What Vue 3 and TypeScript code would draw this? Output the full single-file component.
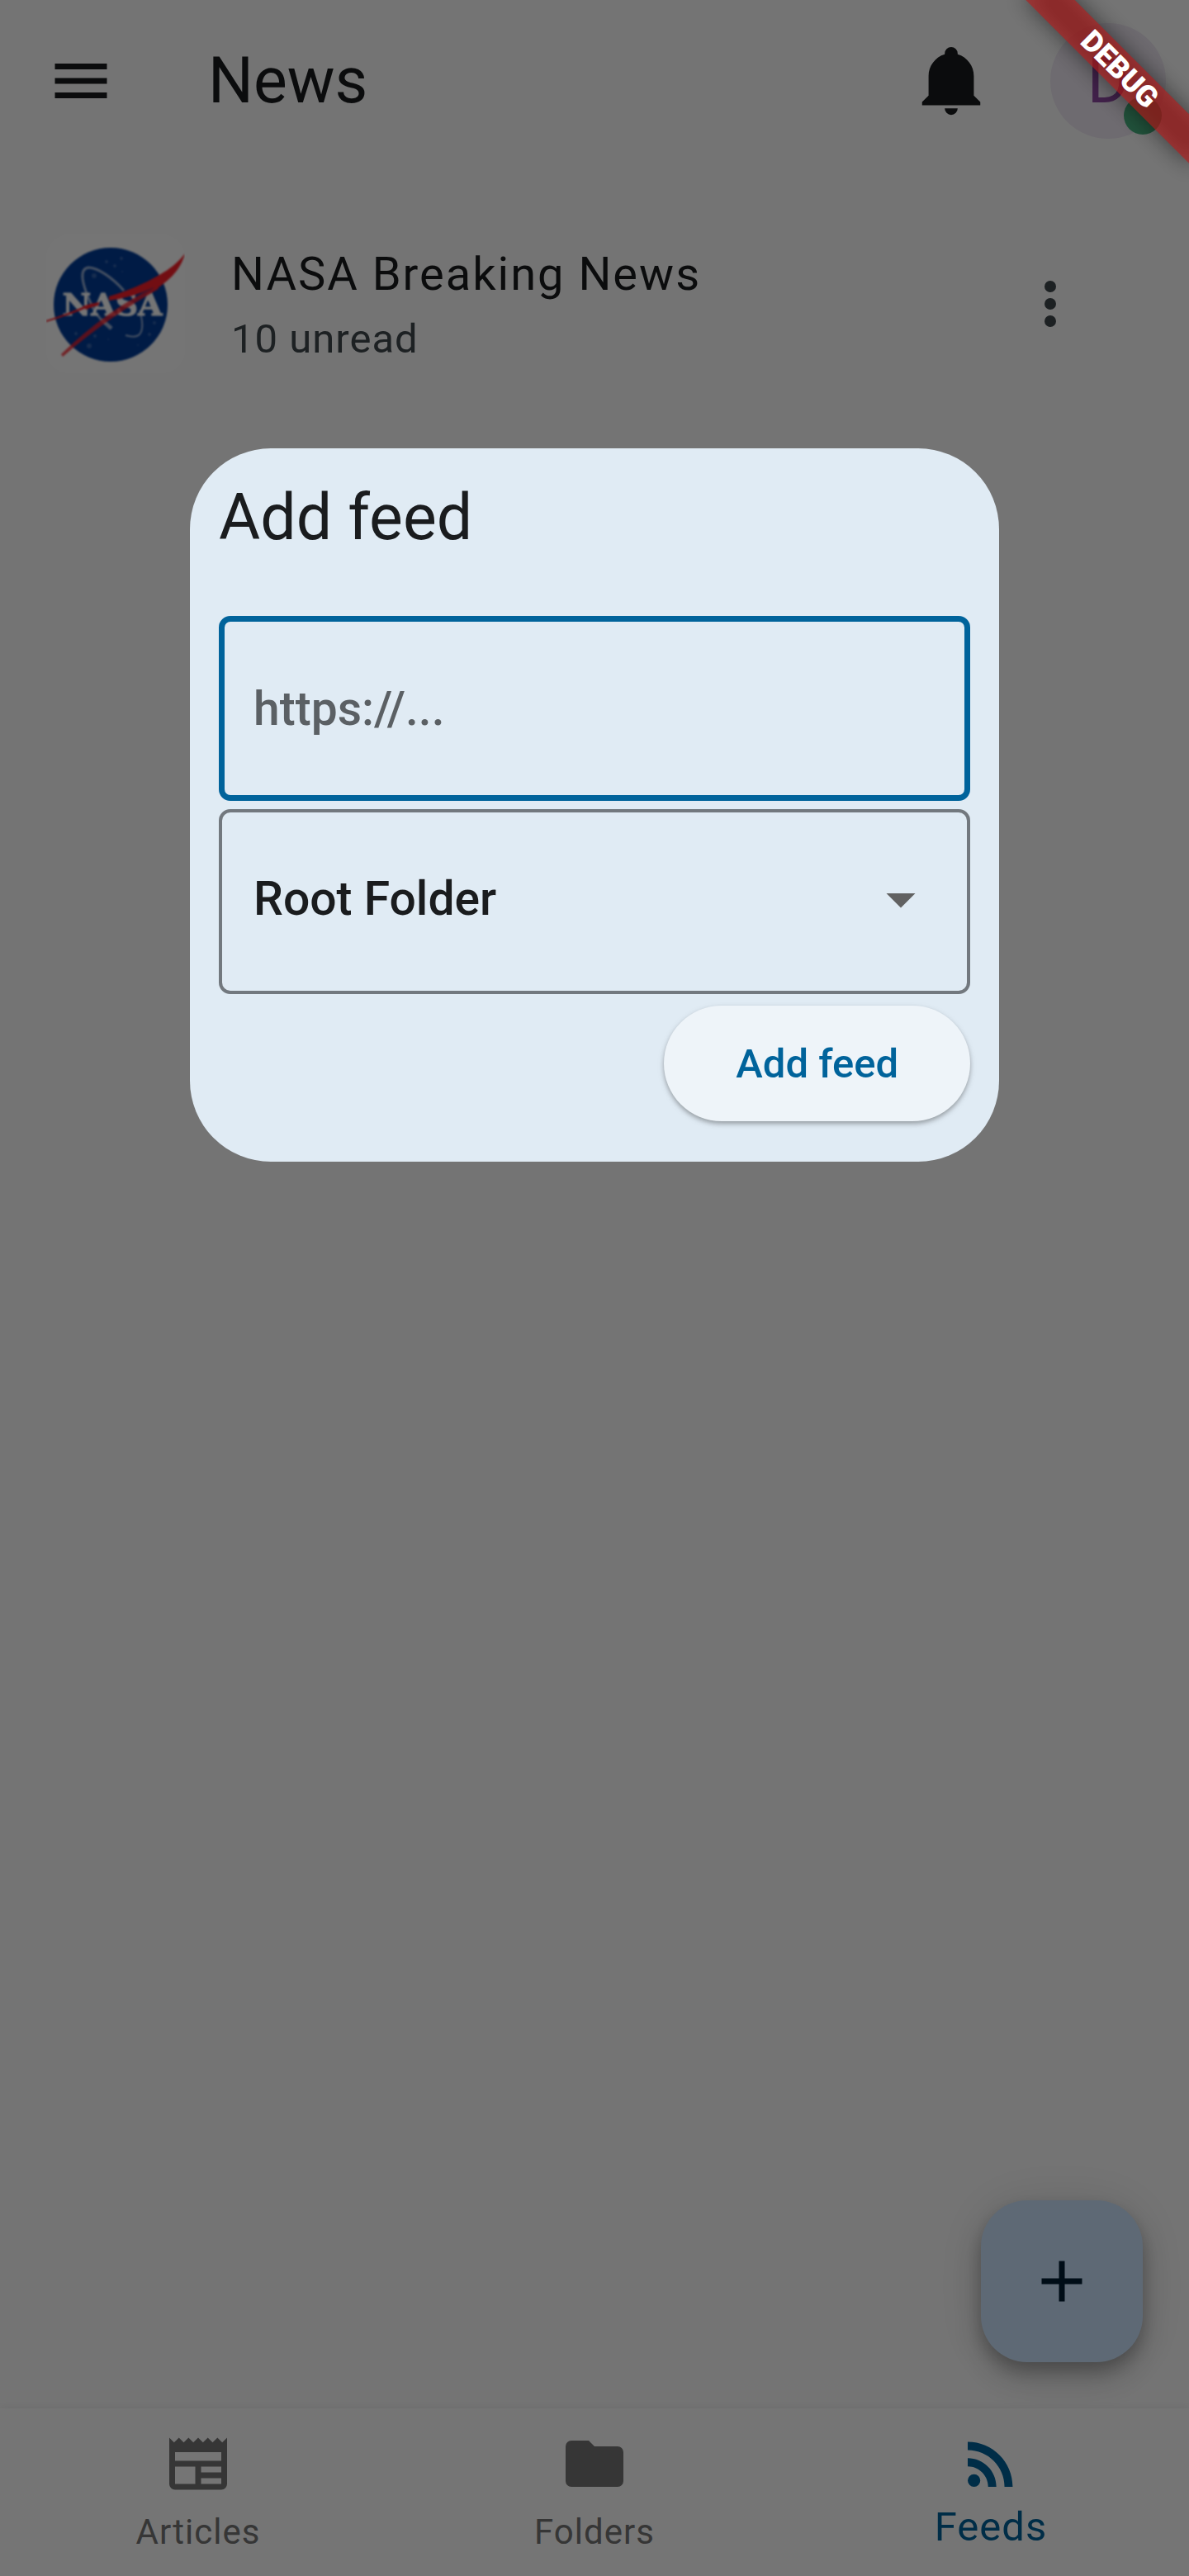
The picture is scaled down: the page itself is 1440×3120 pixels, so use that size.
<script setup lang="ts">
import { ref } from 'vue'

interface Feed {
  id: number
  title: string
  unread: number
}

interface Tab {
  id: string
  label: string
  path: string
}

const feeds: Feed[] = [{ id: 1, title: 'NASA Breaking News', unread: 10 }]

const tabs: Tab[] = [
  {
    id: 'articles',
    label: 'Articles',
    path: 'M22 3l-1.67 1.67L18.67 3 17 4.67 15.33 3l-1.66 1.67L12 3l-1.67 1.67L8.67 3 7 4.67 5.33 3 3.67 4.67 2 3v16a2 2 0 0 0 2 2h16a2 2 0 0 0 2-2V3zM11 19H4v-6h7v6zm9 0h-7v-2h7v2zm0-4h-7v-2h7v2zm0-4H4V8h16v3z',
  },
  {
    id: 'folders',
    label: 'Folders',
    path: 'M10 4H4a2 2 0 0 0-2 2v12a2 2 0 0 0 2 2h16a2 2 0 0 0 2-2V8a2 2 0 0 0-2-2h-8l-2-2z',
  },
  {
    id: 'feeds',
    label: 'Feeds',
    path: 'M6.180 15.640a2.180 2.180 0 1 1 0 4.360a2.180 2.180 0 0 1 0-4.360M4 4.440v2.830c7.030 0 12.730 5.700 12.730 12.730h2.830c0-8.590-6.970-15.560-15.560-15.560zm0 5.660v2.830c3.900 0 7.070 3.170 7.070 7.070h2.830c0-5.470-4.430-9.900-9.900-9.900z',
  },
]

const activeTab = ref('feeds')
const url = ref('')
const folder = ref('root')
</script>

<template>
  <div class="app">
    <header class="bar">
      <button class="icon-button" type="button" aria-label="Menu">
        <svg class="icon" viewBox="0 0 24 24"><path d="M3 18h18v-2H3v2zm0-5h18v-2H3v2zm0-7v2h18V6H3z" /></svg>
      </button>
      <h1 class="bar-title">News</h1>
      <button class="icon-button" type="button" aria-label="Notifications">
        <svg class="icon bell" viewBox="0 0 24 25">
          <path d="M21 19v1H3v-1l2-2v-6c0-3.100 2.030-5.830 5-6.710V4a2 2 0 0 1 4 0v.29c2.970.88 5 3.610 5 6.710v6l2 2M14 21a2 2 0 0 1-4 0" />
        </svg>
      </button>
      <button class="avatar" type="button" aria-label="Account">
        D
        <span class="status"></span>
      </button>
    </header>

    <main class="content">
      <ul class="feeds">
        <li v-for="feed in feeds" :key="feed.id" class="feed">
          <svg class="logo" viewBox="0 0 168 168" role="img" aria-label="NASA">
            <g class="logo-art">
              <circle cx="78" cy="85" r="69" fill="#003b97" />
              <g fill="none" stroke="#fff" stroke-opacity=".6" stroke-width="3">
                <path d="M94 68C80 52 62 40 51 40C39 42 44 60 52 79C57 92 64 102 72 108" />
                <path d="M113 92C118 108 117 116 113 121Q108 126 96 122" stroke-width="2" />
                <path d="M67 103L79 114" stroke-width="5" />
              </g>
              <g fill="#fff" fill-opacity=".2">
                <circle cx="73" cy="33" r="2" /><circle cx="83" cy="38" r="2" /><circle cx="91" cy="29" r="2" />
                <circle cx="58" cy="50" r="3" /><circle cx="92" cy="45" r="1" /><circle cx="36" cy="120" r="2" />
                <circle cx="52" cy="135" r="3" /><circle cx="59" cy="123" r="2" /><circle cx="125" cy="121" r="2" />
                <circle cx="131" cy="107" r="2" /><circle cx="75" cy="127" r="1" /><circle cx="111" cy="134" r="1" />
              </g>
              <text class="logo-text" x="80" y="98" text-anchor="middle">NASA</text>
              <g fill="#f8202a">
                <path d="M0 104C20 98 34 92 46 87L46 90C34 95 20 100 0 106Z" />
                <path d="M44 87Q54 83 65 82L63 86Q54 88 48 91Z" />
                <path d="M76 75Q110 65 137 49Q157 38 168 23Q163 43 144 58Q130 70 110 80Q130 68 130 64Q106 76 76 80Z" />
                <path d="M134 62Q74 91 18 145L20 148Q74 101 136 66Z" fill-opacity=".8" />
              </g>
            </g>
          </svg>
          <div class="feed-text">
            <span class="feed-title">{{ feed.title }}</span>
            <span class="feed-count">{{ feed.unread }} unread</span>
          </div>
          <button class="icon-button more" type="button" aria-label="More options">
            <svg class="icon" viewBox="0 0 24 24">
              <circle cx="12" cy="6" r="2" /><circle cx="12" cy="12" r="2" /><circle cx="12" cy="18" r="2" />
            </svg>
          </button>
        </li>
      </ul>
      <button class="fab" type="button" aria-label="Add">
        <svg class="icon" viewBox="0 0 24 24"><path d="M19 13h-6v6h-2v-6H5v-2h6V5h2v6h6v2z" /></svg>
      </button>
    </main>

    <nav class="tabs">
      <button
        v-for="tab in tabs"
        :key="tab.id"
        class="tab"
        :class="{ active: tab.id === activeTab }"
        type="button"
        @click="activeTab = tab.id"
      >
        <svg class="icon" viewBox="0 0 24 24"><path :d="tab.path" /></svg>
        <span class="tab-label">{{ tab.label }}</span>
      </button>
    </nav>

    <div class="scrim">
      <form class="dialog" role="dialog" aria-labelledby="dialog-title" @submit.prevent>
        <h2 id="dialog-title" class="dialog-title">Add feed</h2>
        <input v-model="url" class="field url" type="text" placeholder="https://..." aria-label="Feed address" />
        <div class="select-wrap">
          <select v-model="folder" class="field folder" aria-label="Folder">
            <option value="root">Root Folder</option>
          </select>
          <svg class="icon arrow" viewBox="0 0 24 24"><path d="M7 10l5 5 5-5z" /></svg>
        </div>
        <button class="submit" type="submit">Add feed</button>
      </form>
    </div>

    <div class="corner">
      <span class="ribbon">DEBUG</span>
    </div>
  </div>
</template>

<style>
body {
  margin: 0;
}
</style>

<style scoped>
* {
  box-sizing: border-box;
}

.app {
  position: relative;
  display: flex;
  flex-direction: column;
  min-height: 100vh;
  overflow: hidden;
  background: #fdfdfd;
  color: #1a1c1e;
  font-family: Roboto, "Noto Sans", sans-serif;
}

button {
  padding: 0;
  border: 0;
  background: none;
  color: inherit;
  font: inherit;
}

.icon {
  display: block;
  width: 84px;
  height: 84px;
  fill: currentColor;
}

.bar {
  display: flex;
  align-items: center;
  height: 196px;
  padding: 0 28px 0 56px;
}

.bar-title {
  flex: 1;
  margin: 0 0 0 112px;
  font-size: 77px;
  font-weight: 400;
  line-height: 98px;
}

.bell {
  width: 94px;
  height: 98px;
}

.avatar {
  position: relative;
  width: 140px;
  height: 140px;
  margin-left: 73px;
  border-radius: 50%;
  background: #f0e9f4;
  color: #8e48a2;
  font-size: 77px;
  line-height: 140px;
  text-align: center;
}

.status {
  position: absolute;
  right: 5px;
  bottom: 5px;
  width: 46px;
  height: 46px;
  border-radius: 50%;
  background: #49b382;
}

.content {
  display: flex;
  flex: 1;
  flex-direction: column;
  justify-content: space-between;
}

.feeds {
  margin: 0;
  padding: 84px 126px 0 56px;
  list-style: none;
}

.feed {
  display: flex;
  align-items: center;
  min-height: 175px;
}

.logo {
  flex: none;
  width: 168px;
  height: 168px;
  border-radius: 28px;
  background: #fff;
}

.logo-art {
  filter: blur(1px);
}

.logo-text {
  fill: #fff;
  stroke: #fff;
  stroke-width: 1px;
  font: 700 38px "DejaVu Serif", serif;
}

.feed-text {
  display: flex;
  flex: 1;
  flex-direction: column;
  gap: 2px;
  margin-left: 56px;
}

.feed-title {
  font-size: 56px;
  line-height: 84px;
  letter-spacing: 2px;
}

.feed-count {
  color: #41484d;
  font-size: 49px;
  line-height: 70px;
  letter-spacing: 1px;
}

.more {
  color: #41484d;
}

.fab {
  display: flex;
  align-items: center;
  justify-content: center;
  align-self: flex-end;
  width: 196px;
  height: 196px;
  margin: 0 56px 56px 0;
  border-radius: 56px;
  background: #cde5ff;
  color: #001d32;
  box-shadow: 0 10px 18px rgba(0, 0, 0, 0.2), 0 20px 35px rgba(0, 0, 0, 0.14), 0 4px 62px rgba(0, 0, 0, 0.12);
}

.tabs {
  display: flex;
  height: 203px;
  padding-top: 25px;
  background: #fff;
  box-shadow: 0 -2px 10px rgba(0, 0, 0, 0.06);
}

.tab {
  display: flex;
  flex: 1;
  flex-direction: column;
  align-items: center;
  color: #767676;
}

.tab-label {
  font-size: 42px;
  line-height: 82px;
  letter-spacing: 1px;
}

.tab.active {
  color: #00639b;
}

.active .tab-label {
  font-size: 49px;
  line-height: 70px;
}

.scrim {
  position: absolute;
  inset: 0;
  display: flex;
  align-items: flex-start;
  justify-content: center;
  padding: 543px 140px 140px;
  background: rgba(0, 0, 0, 0.54);
}

.dialog {
  display: flex;
  flex: 0 1 980px;
  flex-direction: column;
  padding: 35px 35px 49px;
  border-radius: 98px;
  background: #e0ebf4;
}

.dialog-title {
  margin: 0 0 70px;
  font-size: 77px;
  font-weight: 400;
  line-height: 98px;
}

.field {
  display: block;
  width: 100%;
  height: 224px;
  margin: 0;
  border-radius: 14px;
  outline: 0;
  background: transparent;
  color: #1a1c1e;
  font-family: inherit;
  font-size: 57px;
  font-weight: 500;
}

.url {
  padding: 0 35px;
  border: 7px solid #00639b;
}

.url::placeholder {
  color: #5b6064;
  opacity: 1;
}

.select-wrap {
  display: grid;
  align-items: center;
  margin-top: 10px;
}

.select-wrap > * {
  grid-area: 1 / 1;
}

.folder {
  padding: 0 38px 8px;
  border: 4px solid #72787e;
  appearance: none;
}

.arrow {
  justify-self: end;
  margin: 0 42px 6px 0;
  color: #616161;
  pointer-events: none;
}

.submit {
  align-self: flex-end;
  height: 140px;
  margin-top: 14px;
  padding: 0 87px;
  border-radius: 70px;
  background: #eef4f9;
  color: #00639b;
  font-size: 49px;
  font-weight: 500;
  box-shadow: 0 3px 5px rgba(0, 0, 0, 0.25), 0 3px 10px rgba(0, 0, 0, 0.1);
}

.corner {
  position: absolute;
  top: 0;
  right: 0;
  width: 280px;
  height: 280px;
  overflow: hidden;
  pointer-events: none;
}

.ribbon {
  position: absolute;
  top: 63px;
  right: -56px;
  width: 280px;
  height: 42px;
  transform: rotate(45deg);
  color: #fff;
  font-size: 36px;
  font-weight: 900;
  line-height: 42px;
  text-align: center;
}

.ribbon::before,
.ribbon::after {
  content: "";
  position: absolute;
  inset: 0;
  z-index: -1;
}

.ribbon::before {
  background: rgba(0, 0, 0, 0.5);
  filter: blur(14px);
}

.ribbon::after {
  background: rgba(183, 28, 28, 0.63);
}
</style>
